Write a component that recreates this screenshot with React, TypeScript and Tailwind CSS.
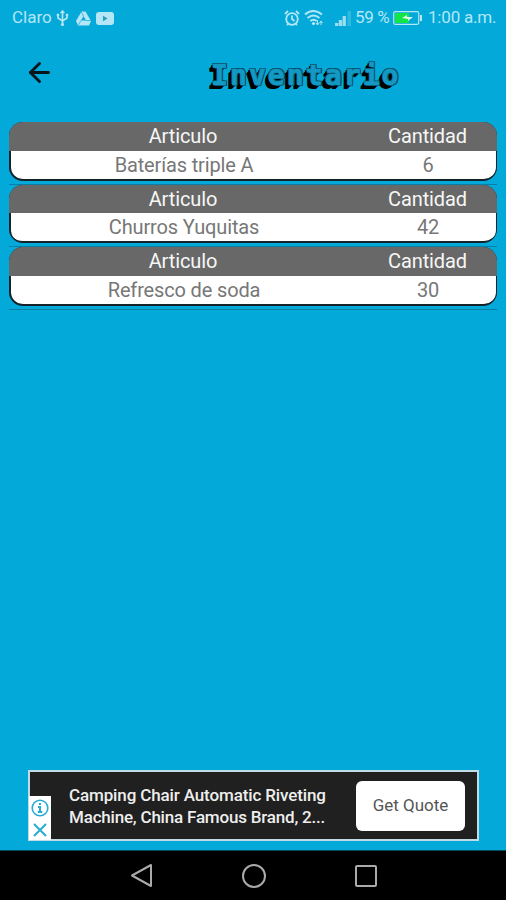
import { ArrowLeft } from 'lucide-react';

type Item = {
  name: string;
  quantity: number;
};

const items: Item[] = [
  { name: 'Baterías triple A', quantity: 6 },
  { name: 'Churros Yuquitas', quantity: 42 },
  { name: 'Refresco de soda', quantity: 30 },
];

export default function App() {
  return (
    <div className="flex h-[900px] w-[506px] flex-col overflow-hidden bg-[#03aad9] font-[Roboto,sans-serif]">
      <StatusBar />
      <Header />
      <main className="flex-1 px-[9px] pt-[22px]">
        {items.map((item) => (
          <ItemCard key={item.name} item={item} />
        ))}
      </main>
      <AdBanner />
      <NavBar />
    </div>
  );
}

function StatusBar() {
  return (
    <div className="flex h-9 items-center pl-3 pr-3 text-[17px] text-[#b5e6f5]">
      <span className="w-[40px] whitespace-nowrap">Claro</span>
      <UsbIcon />
      <DriveIcon />
      <VideoIcon />
      <div className="ml-auto flex items-center">
        <AlarmIcon />
        <WifiIcon />
        <SignalIcon />
        <span className="ml-[3px] w-[37px] whitespace-nowrap tracking-[-0.4px]">59 %</span>
        <BatteryIcon />
        <span className="ml-[5px] w-[66px] whitespace-nowrap tracking-[-0.2px]">1:00 a.m.</span>
      </div>
    </div>
  );
}

function Header() {
  return (
    <header className="flex h-16 items-center pl-[24px]">
      <ArrowLeft className="mt-[9px] h-[31px] w-[31px] text-[#06161c]" strokeWidth={2.2} />
      <h1 className="ml-[156px] mt-[15px] font-['DejaVu_Sans_Mono',monospace] text-[28px] font-bold leading-none tracking-[2.1px] text-[#1299c4] [-webkit-text-stroke:0.7px_#1299c4] [text-shadow:-1px_-1px_0_#064f66,0px_-1.3px_0_#064f66,1.4px_-1px_0_#064f66,1.4px_1px_0_#064f66,-1px_1px_0_#000,-2px_1px_0_#000,-2px_2px_0_#000,-3px_3px_0_#000,-4px_4px_0_#000]">
        Inventario
      </h1>
    </header>
  );
}

function ItemCard({ item }: { item: Item }) {
  return (
    <div className="h-[62.6px] border-b border-[#087fa3]">
      <div className="h-[58.5px] overflow-hidden rounded-[14px] border-b-2 border-[#14232a] bg-[#14232a] text-center text-[20px]">
        <div className="grid h-[28.5px] grid-cols-[348px_141px] items-center bg-[#686868] leading-7 tracking-[-0.1px] text-[#f7f7f7]">
          <span>Articulo</span>
          <span>Cantidad</span>
        </div>
        <div className="mx-[1.5px] grid h-[28.5px] grid-cols-[347px_141px] items-center rounded-b-[12px] bg-white leading-7 tracking-[-0.15px] text-[#777]">
          <span>{item.name}</span>
          <span>{item.quantity}</span>
        </div>
      </div>
    </div>
  );
}

function AdBanner() {
  return (
    <div className="relative mb-[9px] ml-[28px] flex h-[71px] w-[451px] items-center border-2 border-[#c1dce4] bg-[#202020]">
      <p className="ml-[39px] mt-[2px] w-[270px] whitespace-nowrap text-[17px] font-medium leading-[21.5px] tracking-[-0.13px] text-[#eee]">
        Camping Chair Automatic Riveting
        <br />
        <span className="tracking-[-0.2px]">Machine, China Famous Brand, 2...</span>
      </p>
      <button className="ml-[17px] h-[50px] w-[109px] rounded-[6px] bg-white pt-px text-[17px] text-[#555]">
        Get Quote
      </button>
      <div className="absolute -bottom-px -left-px flex h-[44px] w-[22px] flex-col items-center justify-around bg-white">
        <svg width="18" height="18" viewBox="0 0 18 18" fill="none" stroke="#27acd2" strokeWidth="1.6">
          <circle cx="9" cy="9" r="7.8" />
          <path d="M9 4v2M7 8h2v5M6.8 13h4.5" strokeWidth="2" />
        </svg>
        <svg width="16" height="16" viewBox="0 0 16 16" stroke="#27acd2" strokeWidth="2">
          <path d="m2 2 12 12M14 2 2 14" />
        </svg>
      </div>
    </div>
  );
}

function NavBar() {
  return (
    <nav className="flex h-[50px] border-t border-[#064b5e] bg-black pl-[86px]">
      <div className="flex w-[111px] items-center justify-center">
        <svg width="24" height="26" viewBox="0 0 24 26" fill="none" stroke="#aaa" strokeWidth="2" strokeLinejoin="round">
          <path d="M21 2v21L2 12.5z" />
        </svg>
      </div>
      <div className="flex w-[113px] items-center justify-center">
        <div className="h-6 w-6 rounded-full border-2 border-[#aaa]" />
      </div>
      <div className="flex w-[112px] items-center justify-center">
        <div className="h-[22px] w-[22px] rounded-[2px] border-2 border-[#aaa]" />
      </div>
    </nav>
  );
}

function UsbIcon() {
  return (
    <svg className="ml-[4px]" width="13" height="18" viewBox="0 0 13 18" fill="none" stroke="currentColor" strokeWidth="1.7">
      <path d="M6.5 3v12M2 6v3l4.5 3L11 9V6" />
      <path d="m4.3 4 2.2-3 2.2 3zM1 5h2v2H1zM10 5h2v2h-2z" fill="currentColor" strokeWidth="0.5" />
      <circle cx="6.5" cy="15.5" r="1.6" fill="currentColor" stroke="none" />
    </svg>
  );
}

function DriveIcon() {
  return (
    <svg className="ml-[7px]" width="15" height="15" viewBox="0 0 15 15">
      <path d="M5.5.5h4L15 10l-2 4.5H2L0 10z" fill="currentColor" />
      <path d="M7.5 5 10 9.5H5z" fill="#03aad9" />
      <path d="M7.5 5 5.2.8M10 9.5h5M5 9.5 2.3 14" stroke="#03aad9" strokeWidth="0.7" />
    </svg>
  );
}

function VideoIcon() {
  return (
    <svg className="ml-[5px]" width="18" height="13" viewBox="0 0 18 13">
      <rect width="18" height="13" rx="3" fill="currentColor" />
      <path d="m7 3.8 4.6 2.7L7 9.2z" fill="#2a9dbe" />
    </svg>
  );
}

function AlarmIcon() {
  return (
    <svg width="16" height="17" viewBox="0 0 16 17" fill="none" stroke="currentColor" strokeWidth="1.8">
      <circle cx="8" cy="9" r="5.8" />
      <path d="M8 5.5V9l2.5 2M1 4l3-3M15 4l-3-3M3 15l1.5-1.5M13 15l-1.5-1.5" />
    </svg>
  );
}

function WifiIcon() {
  return (
    <svg className="ml-[4px]" width="20" height="18" viewBox="0 0 20 18" fill="none" stroke="currentColor" strokeWidth="1.9">
      <path d="M1 5.5q8-7 17 0M3.5 9q6-5 12 0M6.3 12q3.2-2.6 6.4 0" />
      <circle cx="9.5" cy="14.5" r="1.6" fill="currentColor" stroke="none" />
      <path d="M13.5 11v5m-1.5-2 1.5 2 1.5-2M17 16v-4m-1.5 2 1.5-2 1.5 2" strokeWidth="1" />
    </svg>
  );
}

function SignalIcon() {
  return (
    <svg className="ml-[11px]" width="17" height="16" viewBox="0 0 17 16" fill="currentColor">
      <path d="M0 13h3.3v3H0zM3.8 10h3.3v6H3.8zM7.6 6h3.3v10H7.6z" opacity="0.85" />
      <path d="M12.5 1h3.5v15h-3.5z" opacity="0.25" />
    </svg>
  );
}

function BatteryIcon() {
  return (
    <svg className="ml-[1px]" width="30" height="14" viewBox="0 0 30 14">
      <rect x="0.7" y="0.7" width="25" height="12.6" rx="1.5" fill="none" stroke="currentColor" strokeWidth="1.2" />
      <path d="M2 2h14v10H2z" fill="#12e646" />
      <path d="m9 7 5-3v2h6l-5 4V8z" fill="#d9fae9" />
      <path d="M27 4h2v6h-2z" fill="currentColor" />
    </svg>
  );
}
